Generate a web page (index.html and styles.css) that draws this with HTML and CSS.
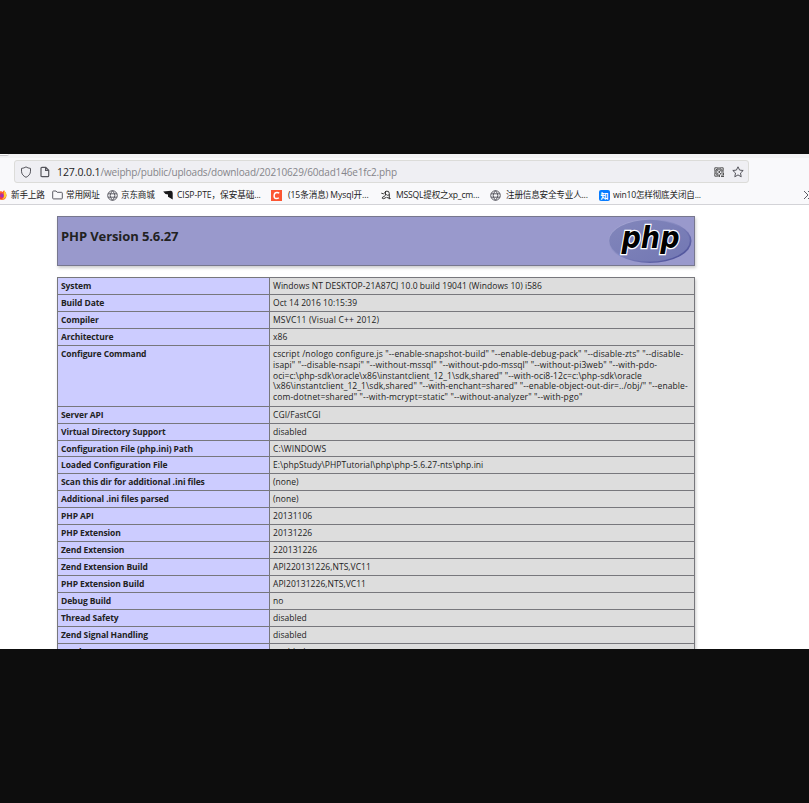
FILE: index.html
```html
<!DOCTYPE html>
<html lang="zh-CN">
<head>
<meta charset="utf-8">
<title>phpinfo()</title>
<link rel="stylesheet" href="styles.css">
</head>
<body>
<main class="window">
  <header class="chrome">
    <div class="tabstrip"><span class="tab-end"></span></div>
    <div class="navbar">
      <div class="address">
        <svg class="shield" width="12" height="12" viewBox="0 0 12 12"><path d="M6 .9C4.800 1.800 3.200 2.200 1.500 2.400V5.200C1.500 8 3.400 10.200 6 11.300C8.600 10.200 10.500 8 10.500 5.200V2.400C8.800 2.200 7.200 1.800 6 .9Z"/></svg>
        <svg class="page" width="10" height="12" viewBox="0 0 10 12"><path d="M2 1.300H5.800L8.700 4.200V9.700Q8.700 10.700 7.700 10.700H2Q1 10.700 1 9.700V2.300Q1 1.300 2 1.300ZM5.600 1.500V4.400H8.500"/></svg>
        <span class="url"><b>127.0.0.1</b>/weiphp/public/uploads/download/20210629/60dad146e1fc2.php</span>
        <svg class="qr" width="10" height="10" viewBox="0 0 10 10"><path class="line" d="M.8.800H3.800V3.800H.8ZM6.200.800H9.200V3.800H6.200ZM.8 6.200H3.800V9.200H.8Z"/><path class="solid" d="M2 2h1v1H2ZM7.300 2h1v1h-1ZM2 7.300h1v1H2ZM4.500 0h1v3h-1ZM4.500 4h1.500v2H4.500ZM0 4.500h3v1H0ZM7 4.500h3v1H7ZM6 6h1.500v1.500H6ZM8.500 6H10v2H8.500ZM4.500 7.500H6V10H4.500ZM7 8.500h3V10H7Z"/></svg>
        <svg class="star" width="12" height="12" viewBox="0 0 12 12"><path d="M6 .8L7.600 4.100L11.200 4.500L8.500 7L9.200 10.800L6 8.900L2.800 10.800L3.500 7L.8 4.500L4.400 4.100Z"/></svg>
      </div>
    </div>
    <nav class="bookmarks">
      <span class="mark m1"><svg width="10" height="10" viewBox="0 0 10 10"><path fill="#ff662d" d="M4 1L5.500 2L7 .3Q9.600 3 9.600 5.500Q9 10 4.500 10Q0 9 0 5Q0 3 1.500 2Z"/><path fill="#ffcf32" d="M7 .3Q10.500 4 8.500 7.500Q6.500 10 3 9Q7.500 8 7 5Z"/><circle cx="4.200" cy="5.700" r="2.500" fill="#a42eb5"/><path fill="#f33d3a" d="M0 3.500Q3 2.500 5 4Q3 4 3 6Q4 8 7 7.500Q4 10.500 1 8Z"/></svg><span>新手上路</span></span>
      <span class="mark m2"><svg width="11" height="10" viewBox="0 0 11 10"><path class="line" d="M1.500 1H4L5.200 2.300H9.500Q10.300 2.300 10.300 3.100V8.100Q10.300 8.900 9.500 8.900H1.500Q.7 8.900.7 8.100V1.800Q.7 1 1.500 1Z"/></svg><span>常用网址</span></span>
      <span class="mark m3"><svg width="11" height="11" viewBox="0 0 11 11"><path class="line" d="M5.500.700A4.800 4.800 0 1 0 5.500 10.300A4.800 4.800 0 1 0 5.500.700ZM5.500.700Q.9 5.500 5.500 10.300Q10.100 5.500 5.500.700ZM1 3.800H10M1 7.200H10"/></svg><span>京东商城</span></span>
      <span class="mark m4"><svg width="11" height="10" viewBox="0 0 11 10"><path fill="#18181a" d="M.2 1.400L8 .8Q9.700 1.300 9.700 3V9.600L5 6.800L5 4.600Q2 4.500.2 1.400Z"/></svg><span>CISP-PTE，保安基础...</span></span>
      <span class="mark m5"><svg width="11" height="11" viewBox="0 0 11 11"><rect width="11" height="11" fill="#fc5531"/><path d="M8.200 3.200Q7.300 2.300 5.800 2.400Q3.600 2.500 3.200 5Q2.700 8.500 5.300 8.600Q6.900 8.600 7.800 7.800" fill="none" stroke="#fff" stroke-width="1.500"/></svg><span>(15条消息) Mysql开...</span></span>
      <span class="mark m6"><svg width="10" height="10" viewBox="0 0 10 10"><path d="M.3 3.200Q2.500 5 4.500 2M4.500 1V4Q5 5.500 3 6.500Q1 7 1.200 8.200Q2.300 9.600 5.200 7.400M5 1.200Q8.500.5 8.300 3.500V9.200M8.200 4.800Q6.500 6 5.200 4.500M5.500 7.400L9.600 8.500" fill="none" stroke="#353535" stroke-width="1"/></svg><span>MSSQL提权之xp_cm...</span></span>
      <span class="mark m7"><svg width="11" height="11" viewBox="0 0 11 11"><path class="line" d="M5.500.700A4.800 4.800 0 1 0 5.500 10.300A4.800 4.800 0 1 0 5.500.700ZM5.500.700Q.9 5.500 5.500 10.300Q10.100 5.500 5.500.700ZM1 3.800H10M1 7.200H10"/></svg><span>注册信息安全专业人...</span></span>
      <span class="mark m8"><i class="zhi">知</i><span>win10怎样彻底关闭自...</span></span>
      <svg class="more" width="10" height="10" viewBox="0 0 10 10"><path class="line" d="M1 1L5 5L1 9M5 1L9 5L5 9"/></svg>
    </nav>
  </header>
  <section class="content">
    <div class="banner">
      <h1>PHP Version 5.6.27</h1>
      <svg class="logo" width="84" height="46" viewBox="0 0 84 46" role="img" aria-label="php">
        <defs>
          <linearGradient id="rim" x1="0" y1="0" x2="1" y2="1"><stop offset="0" stop-color="#b5b5dc"/><stop offset=".45" stop-color="#8689c0"/><stop offset="1" stop-color="#3f4390"/></linearGradient>
          <linearGradient id="face" x1="0" y1="0" x2="1" y2="1"><stop offset="0" stop-color="#8286bb"/><stop offset="1" stop-color="#7277b3"/></linearGradient>
        </defs>
        <ellipse cx="42" cy="23" rx="41.500" ry="22" fill="url(#rim)"/>
        <ellipse cx="41.500" cy="22.700" rx="40.300" ry="20.900" fill="url(#face)"/>
        <text class="logo-text" x="13.500" y="30" textLength="58" lengthAdjust="spacingAndGlyphs">php</text>
      </svg>
    </div>
    <table class="info">
      <tbody>
      <tr><th>System</th><td>Windows NT DESKTOP-21A87CJ 10.0 build 19041 (Windows 10) i586</td></tr>
      <tr><th>Build Date</th><td>Oct 14 2016 10:15:39</td></tr>
      <tr><th>Compiler</th><td class="compiler">MSVC11 (Visual C++ 2012)</td></tr>
      <tr><th>Architecture</th><td>x86</td></tr>
      <tr class="command"><th>Configure Command</th><td>
        <span class="l1">cscript /nologo configure.js "--enable-snapshot-build" "--enable-debug-pack" "--disable-zts" "--disable-</span>
        <span class="l2">isapi" "--disable-nsapi" "--without-mssql" "--without-pdo-mssql" "--without-pi3web" "--with-pdo-</span>
        <span class="l3">oci=c:\php-sdk\oracle\x86\instantclient_12_1\sdk,shared" "--with-oci8-12c=c:\php-sdk\oracle</span>
        <span class="l4">\x86\instantclient_12_1\sdk,shared" "--with-enchant=shared" "--enable-object-out-dir=../obj/" "--enable-</span>
        <span class="l5">com-dotnet=shared" "--with-mcrypt=static" "--without-analyzer" "--with-pgo"</span></td></tr>
      <tr><th>Server API</th><td>CGI/FastCGI</td></tr>
      <tr><th>Virtual Directory Support</th><td>disabled</td></tr>
      <tr><th>Configuration File (php.ini) Path</th><td>C:\WINDOWS</td></tr>
      <tr><th>Loaded Configuration File</th><td>E:\phpStudy\PHPTutorial\php\php-5.6.27-nts\php.ini</td></tr>
      <tr><th>Scan this dir for additional .ini files</th><td>(none)</td></tr>
      <tr><th>Additional .ini files parsed</th><td>(none)</td></tr>
      <tr><th>PHP API</th><td>20131106</td></tr>
      <tr><th>PHP Extension</th><td>20131226</td></tr>
      <tr><th>Zend Extension</th><td>220131226</td></tr>
      <tr><th>Zend Extension Build</th><td>API220131226,NTS,VC11</td></tr>
      <tr><th>PHP Extension Build</th><td>API20131226,NTS,VC11</td></tr>
      <tr><th>Debug Build</th><td>no</td></tr>
      <tr><th>Thread Safety</th><td>disabled</td></tr>
      <tr><th>Zend Signal Handling</th><td>disabled</td></tr>
      <tr><th>Zend Memory Manager</th><td>enabled</td></tr>
      </tbody>
    </table>
  </section>
</main>
</body>
</html>
```
FILE: styles.css
```css
* { box-sizing: border-box; }
body {
  margin: 0;
  height: 803px;
  padding: 154px 0;
  overflow: hidden;
  background: #0d0d0d;
  color: #222;
  font-family: "Open Sans", "Noto Sans CJK SC", sans-serif;
}
svg { display: block; flex: none; }
.window { height: 495px; overflow: hidden; background: #fff; }
.chrome { height: 51px; background: #f9f9fb; border-bottom: 1px solid #d3d3d7; }
.tabstrip { height: 4px; background: #f2f2f4; }
.tab-end { display: block; width: 9px; height: 2px; background: #fff; border-bottom: 1px solid #c7c7ca; border-radius: 0 0 3px 0; }
.navbar { padding: 2px 60px 0 14px; }
.address {
  display: flex;
  align-items: center;
  height: 23px;
  padding: 0 4px 0 5px;
  border: 1px solid #dcdcd9;
  border-radius: 3px;
  background: #efeff3;
}
.address svg { fill: none; stroke: #55555c; stroke-width: 1; }
.address .page { margin-left: 8px; stroke-width: 1.2; }
.url { flex: 1; margin-left: 7px; font-size: 10px; letter-spacing: -.17px; color: #85858a; white-space: nowrap; }
.url b { font-size: 10.500px; letter-spacing: -.09px; font-weight: 500; color: #1c1c22; }
.address .qr { margin-right: 8px; stroke: none; }
.qr .line { stroke: #555; stroke-width: 1; }
.qr .solid { fill: #555; }
.bookmarks { position: relative; display: flex; height: 20px; margin-top: 2px; font-size: 8.600px; color: #222; overflow: hidden; }
.mark { display: flex; align-items: center; flex: none; white-space: nowrap; line-height: 20px; letter-spacing: -.2px; }
.mark svg, .zhi { margin-right: 3px; }
.bookmarks .line { fill: none; stroke: #5b5b63; stroke-width: 1; }
.m1 { width: 55px; margin-left: -3px; }
.m1 svg { margin-right: 4px; }
.m2 { width: 55px; }
.m3 { width: 56px; }
.m4 { width: 108px; letter-spacing: -.07px; }
.m5 { width: 110px; letter-spacing: -.07px; }
.m5 svg { margin-right: 6px; }
.m6 { width: 109px; }
.m6 svg { margin-right: 5px; }
.m7 { width: 109px; }
.m7 svg { margin-right: 5px; }
.m8 { width: 204px; }
.zhi { width: 11px; height: 11px; border-radius: 2px; background: #087cff; color: #fff; font: 700 8px/11px "Noto Sans CJK SC", sans-serif; text-align: center; letter-spacing: 0; }
.more { margin-top: 5px; }
.content { width: 638px; margin: 11px 0 0 57px; }
.banner {
  display: flex;
  justify-content: space-between;
  height: 50px;
  padding: 1px 2px 0 3px;
  border: 1px solid #77778e;
  background: #9999cc;
  box-shadow: 1px 2px 3px #ccc;
}
h1 { margin: 9px 0 0; font-size: 13px; line-height: 18px; font-weight: 700; letter-spacing: -.1px; white-space: nowrap; }
.logo-text { font: italic 700 31px "DejaVu Sans", sans-serif; fill: #000; stroke: #fff; stroke-width: 2.500px; paint-order: stroke; }
.info {
  width: 638px;
  margin-top: 11px;
  border-collapse: collapse;
  table-layout: fixed;
  font-size: 8.500px;
  line-height: 11px;
  box-shadow: 1px 2px 3px #ccc;
}
.info th, .info td {
  height: 16.930px;
  padding: 2px 3px;
  border: 1px solid #77777c;
  text-align: left;
  vertical-align: top;
  white-space: nowrap;
}
.info th { width: 212px; background: #ccccff; letter-spacing: -.1px; }
.info td { background: #ddd; letter-spacing: .05px; }
.info .compiler { letter-spacing: .18px; }
.info .command td { height: 61px; padding: 3px 3px 1px; }
.command span { display: block; width: max-content; line-height: 10.900px; letter-spacing: .11px; }
.command .l3 { letter-spacing: .06px; }
.command .l4 { letter-spacing: .08px; }
.command .l5 { letter-spacing: .13px; }
```
